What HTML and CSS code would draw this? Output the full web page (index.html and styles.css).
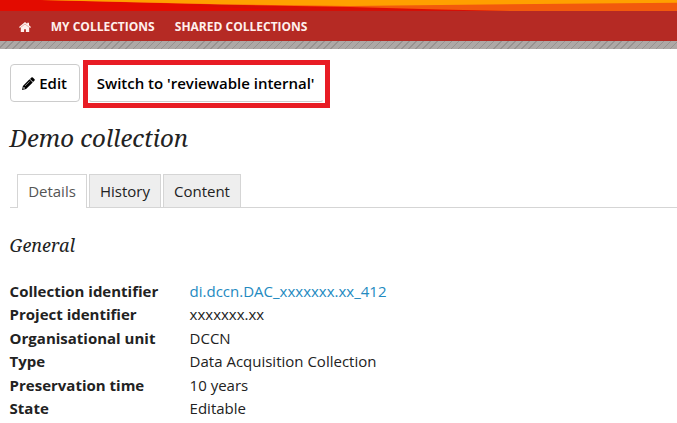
FILE: index.html
```html
<!DOCTYPE html>
<html lang="en">
<head>
<meta charset="utf-8">
<title>Demo collection</title>
<link rel="stylesheet" href="styles.css">
</head>
<body>
<header>
  <svg class="banner" width="677" height="11" viewBox="0 0 677 11">
    <rect width="677" height="11" fill="#e30b00"/>
    <path d="M220 5L440 9.7L520 11H300L180 5Z" fill="#d60f06"/>
    <path d="M40 0L220 4.5L350 7L440 9.5L510 11H677V0Z" fill="#f25a0c"/>
    <path d="M42 0L220 4.2L350 6L440 5L677 2.8V0Z" fill="#ffa000"/>
  </svg>
  <nav class="nav">
    <a class="home" aria-label="Home"><svg width="12" height="10" viewBox="0 0 12 10"><path d="M6 0L8.2 1.8V.7H10V3.3L12 5.1L11.1 6L6 1.7L.9 6L0 5.1Z"/><path d="M6 1.9L10.2 5.4V10H6.9V7.2H5.1V10H1.8V5.4Z"/></svg></a>
    <a class="mine">MY COLLECTIONS</a>
    <a class="shared">SHARED COLLECTIONS</a>
  </nav>
  <div class="hatch"></div>
</header>
<main>
  <div class="actions">
    <button class="button edit"><svg width="13" height="13" viewBox="0 0 13 13"><path fill-rule="evenodd" d="M0 13L.9 8.9L7.5 2.3L10.7 5.5L4.1 12.1ZM1.5 10.2L1.2 11.2L1.8 11.8L2.8 11.5V10.6H1.9V10.2ZM3.2 9.1L7.8 4.5L7.5 4.2L2.9 8.8Z"/><path d="M8 1.9L9.4.5Q10.1-.2 10.8.5L12.5 2.2Q13.2 2.9 12.5 3.6L11.1 5Z"/></svg><span>Edit</span></button>
    <div class="highlight"><button class="button switch"><span>Switch to 'reviewable internal'</span></button></div>
  </div>
  <h1><span>Demo collection</span></h1>
  <div class="tabs"><a class="tab active">Details</a><a class="tab history">History</a><a class="tab content">Content</a></div>
  <h2><span>General</span></h2>
  <dl>
    <dt>Collection identifier</dt><dd><a>di.dccn.DAC_xxxxxxx.xx_412</a></dd>
    <dt>Project identifier</dt><dd>xxxxxxx.xx</dd>
    <dt>Organisational unit</dt><dd>DCCN</dd>
    <dt>Type</dt><dd>Data Acquisition Collection</dd>
    <dt>Preservation time</dt><dd>10 years</dd>
    <dt>State</dt><dd>Editable</dd>
  </dl>
</main>
</body>
</html>
```
FILE: styles.css
```css
* { box-sizing: border-box; }
body { margin: 0; background: #fff; color: #222; font: 15px/23.4px "Open Sans", "Noto Sans", sans-serif; overflow: hidden; }
.banner { display: block; }
.nav { display: flex; align-items: center; height: 30px; padding: 1px 0 0 19px; background: #b52a24; color: #fff0ed; font-size: 12px; font-weight: 700; white-space: nowrap; }
.nav svg { display: block; fill: #fff0ed; }
.mine { margin-left: 19.8px; width: 124px; }
.hatch { height: 8px; background: repeating-linear-gradient(135deg, #aea8a6 0 4px, #989290 4px 5px); }
main { padding: 0 0 0 9.6px; }
.actions { display: flex; align-items: center; height: 48px; margin-top: 11px; gap: 3px; }
.button { display: flex; align-items: center; justify-content: center; border: 1px solid #ccc; border-radius: 4px; background: #fff; color: #000; font: 600 15px/20px "Open Sans", sans-serif; padding: 0; }
.edit { width: 70px; height: 38px; gap: 4px; margin-bottom: 2px; }
.highlight { width: 247px; height: 48px; border: 5px solid #e81c24; padding: 0; }
.switch { width: 236px; height: 37px; border-color: transparent transparent #ccc; white-space: nowrap; }
.highlight .switch { padding-bottom: 1px; }
h1, h2 { font-family: "Noto Serif", "Droid Serif", serif; font-style: italic; font-weight: 400; margin: 0; }
h1 { font-size: 24px; line-height: 32px; margin-top: 14px; height: 32px; }
.tabs { display: flex; gap: 2px; height: 34px; margin-top: 20px; padding-left: 7.4px; border-bottom: 1px solid #d5d5d5; }
.tab { height: 33px; border: 1px solid #d5d5d5; border-bottom: 0; background: #eee; line-height: 33px; text-align: center; }
.active { width: 70px; height: 34px; background: #fff; color: #555; }
.history { width: 72px; }
.content { width: 78px; }
h2 { font-size: 18px; line-height: 24px; height: 24px; margin-top: 25px; }
dl { display: grid; grid-template-columns: 180px 1fr; grid-auto-rows: 23.4px; margin: 23px 0 0; }
dt { font-weight: 700; }
dd { margin: 0; }
dd a { color: #238abf; }
```
